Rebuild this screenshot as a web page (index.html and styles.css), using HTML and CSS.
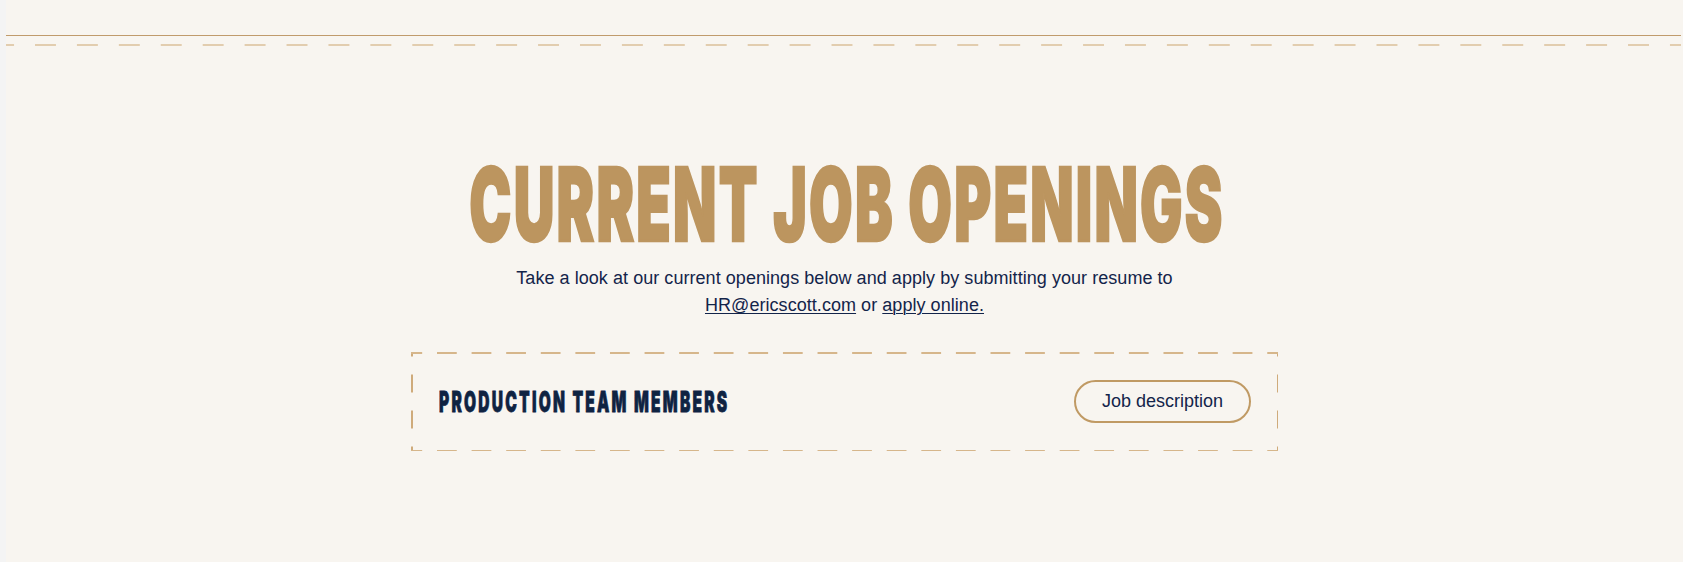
FILE: index.html
```html
<!DOCTYPE html>
<html lang="en">
<head>
<meta charset="utf-8">
<title>Current Job Openings</title>
<link rel="stylesheet" href="styles.css">
</head>
<body>
<main class="main">
  <div class="rule-solid"></div>
  <div class="rule-dashed"></div>
  <section class="openings">
    <h1 class="title"><span class="title-inner">CURRENT JOB OPENINGS</span></h1>
    <p class="intro">Take a look at our current openings below and apply by submitting your resume to<br><a href="#" class="link">HR@ericscott.com</a> or <a href="#" class="link">apply online.</a></p>
    <div class="job-card">
      <h2 class="job-title"><span class="job-title-inner">PRODUCTION TEAM MEMBERS</span></h2>
      <a href="#" class="job-btn">Job description</a>
    </div>
  </section>
</main>
</body>
</html>
```

FILE: styles.css
```css
html, body {
  margin: 0;
  padding: 0;
}
body {
  background: #f4f4f4;
}
.main {
  margin-left: 6px;
  min-height: 562px;
  background: #f8f5f0;
  padding-top: 35px;
  box-sizing: border-box;
  overflow: hidden;
}
.rule-solid {
  height: 1px;
  margin-right: 2px;
  background: #c09b6c;
}
.rule-dashed {
  height: 2px;
  margin-top: 8px;
  margin-right: 2px;
  background: linear-gradient(90deg, #e2cdaf 0 21px, transparent 21px) 29px 0 / 41.93px 2px repeat-x;
}
.openings {
  display: flex;
  flex-direction: column;
  align-items: center;
}
.title {
  margin: 106px 0 0;
  font-family: Inter, "Liberation Sans", sans-serif;
  font-weight: 900;
  font-size: 102px;
  line-height: 104px;
  color: #bc955f;
  text-align: center;
  white-space: nowrap;
}
.title-inner {
  display: inline-block;
  -webkit-text-stroke: 2.5px #bc955f;
  letter-spacing: 4px;
  margin-right: -4px;
  transform: scaleX(0.553);
}
.intro {
  margin: 9px 0 0;
  font-family: "Liberation Sans", Arial, sans-serif;
  font-size: 18px;
  line-height: 27px;
  letter-spacing: 0.05px;
  color: #13244a;
  text-align: center;
}
.link {
  color: #13244a;
  text-decoration: underline;
  text-underline-offset: 2px;
  text-decoration-thickness: 1px;
}
.job-card {
  margin-top: 33px;
  width: 867px;
  box-sizing: border-box;
  padding: 28px 27px 28px 28px;
  display: flex;
  align-items: center;
  justify-content: space-between;
  background:
    linear-gradient(90deg, #d6b68b 0 20px, transparent 20px) 26px 0 / 34.6px 1.5px repeat-x,
    linear-gradient(90deg, #d6b68b 0 20px, transparent 20px) 26px 100% / 34.6px 1.5px repeat-x,
    linear-gradient(180deg, #cfab7b 0 9px, transparent 9px 27px, #cfab7b 27px) 0 50% / 1.5px 36px repeat-y,
    linear-gradient(180deg, #cfab7b 0 9px, transparent 9px 27px, #cfab7b 27px) 100% 50% / 1.5px 36px repeat-y;
}
.job-title {
  margin: 0;
  font-family: Inter, "Liberation Sans", sans-serif;
  font-weight: 900;
  font-size: 28px;
  line-height: 34px;
  color: #0f2342;
  white-space: nowrap;
}
.job-title-inner {
  display: inline-block;
  letter-spacing: 4px;
  -webkit-text-stroke: 0.8px #0f2342;
  transform: scaleX(0.555);
  transform-origin: 0 50%;
}
.job-btn {
  display: inline-flex;
  align-items: center;
  justify-content: center;
  width: 177px;
  height: 43px;
  box-sizing: border-box;
  border: 2px solid #c09a64;
  border-radius: 22px;
  font-family: "Liberation Sans", Arial, sans-serif;
  font-size: 18px;
  color: #13244a;
  text-decoration: none;
}
```
